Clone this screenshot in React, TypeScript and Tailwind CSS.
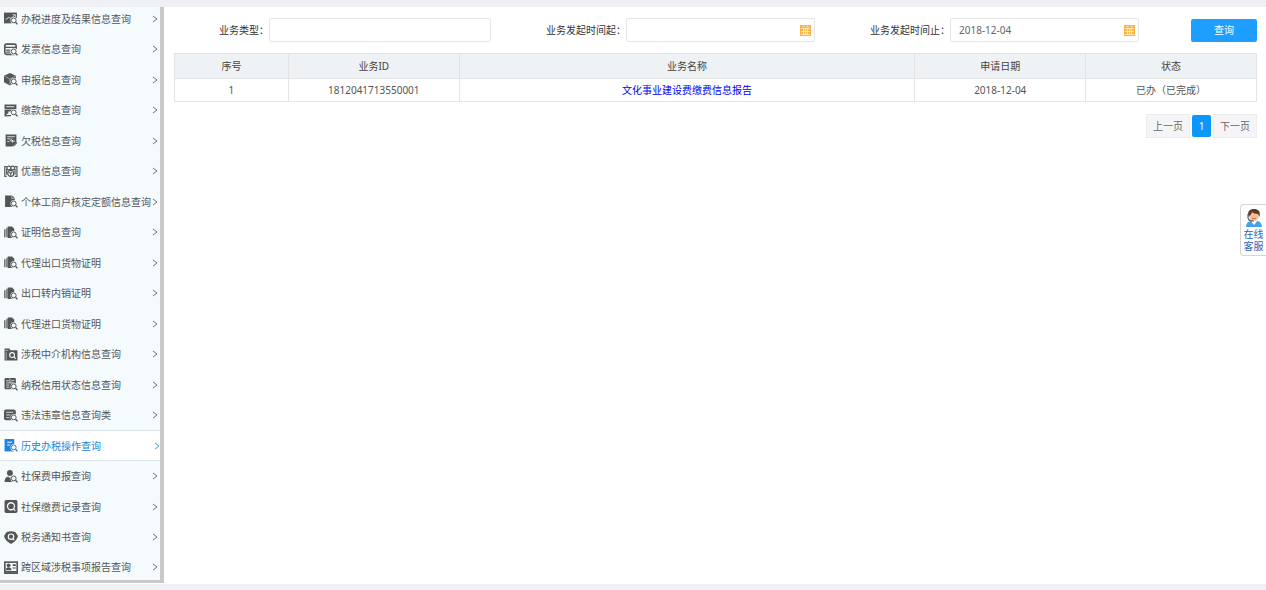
import { useState, type ReactNode } from "react";
import clsx from "clsx";

type MenuItem = {
  label: string;
  icon: ReactNode;
};

/* Small magnifier in the corner of most menu icons */
function Lens() {
  return (
    <g>
      <circle cx="18.5" cy="15.5" r="6.5" fill="#f5fafd" stroke="none" />
      <circle cx="18" cy="15.5" r="4.5" fill="#f5fafd" stroke="currentColor" strokeWidth="1.8" />
      <path d="M21.5 19l3.5 4" stroke="currentColor" strokeWidth="2.4" />
    </g>
  );
}

const stackedDocs = (
  <>
    <path d="M0 6h3v15H0zM4 3h3v18H4z" opacity="0.8" />
    <path d="M7 1h8l4 4v17H7z" />
    <Lens />
  </>
);

const menu: MenuItem[] = [
  {
    label: "办税进度及结果信息查询",
    icon: (
      <>
        <path d="M0 1h24v20H0z" />
        <path d="M3 14l6-4 4 2 7-6M16 5h5v4" stroke="#f5fafd" strokeWidth="1.4" fill="none" />
        <Lens />
      </>
    ),
  },
  {
    label: "发票信息查询",
    icon: (
      <>
        <rect x="1.5" y="2" width="21" height="19" rx="3" fill="none" stroke="currentColor" strokeWidth="3" />
        <path d="M1 8h22M4 13h8M4 17h8" stroke="currentColor" strokeWidth="2.4" />
        <Lens />
      </>
    ),
  },
  {
    label: "申报信息查询",
    icon: (
      <>
        <path d="M11 0l11 5v12l-11 6-11-6V5z" />
        <path d="M1 6l10 5 10-5M11 11v11" stroke="#f5fafd" strokeWidth="0.8" fill="none" />
        <Lens />
      </>
    ),
  },
  {
    label: "缴款信息查询",
    icon: (
      <>
        <path d="M1 1h22v9H1zM1 11h12v3H8v4H5v5H1z" />
        <path d="M4 5h15" stroke="#f5fafd" strokeWidth="1.6" />
        <path d="M5 21.5h8" stroke="currentColor" strokeWidth="2.4" />
        <Lens />
      </>
    ),
  },
  {
    label: "欠税信息查询",
    icon: (
      <>
        <path d="M3 1h20v15l-6 7H3z" />
        <path d="M6 5h14M6 9h6M15 8l-3 5h8M16 11v5M6 14h4" stroke="#f5fafd" strokeWidth="1.5" fill="none" />
        <path d="M15 23l9-8v8z" fill="#f5fafd" />
        <path d="M16 18l2.5 3.5 5.5-6" stroke="currentColor" strokeWidth="2" fill="none" />
      </>
    ),
  },
  {
    label: "优惠信息查询",
    icon: (
      <g fill="none" stroke="currentColor" strokeWidth="2.2">
        <path d="M5 3H1.5v18H5M20 3h4v18h-4M5 7v11M20.5 7v11" />
        <circle cx="9" cy="5.5" r="3.6" />
        <circle cx="16" cy="5.5" r="3.6" />
        <circle cx="12.5" cy="15.5" r="5.5" />
        <path d="M10 13l2.5 3 2.5-3M12.5 15v5" />
      </g>
    ),
  },
  {
    label: "个体工商户核定定额信息查询",
    icon: (
      <>
        <path d="M2 1h13l5 5v16H2z" />
        <path d="M14.5 1v5.5h5" stroke="#f5fafd" strokeWidth="1" fill="none" />
        <Lens />
      </>
    ),
  },
  { label: "证明信息查询", icon: stackedDocs },
  { label: "代理出口货物证明", icon: stackedDocs },
  { label: "出口转内销证明", icon: stackedDocs },
  { label: "代理进口货物证明", icon: stackedDocs },
  {
    label: "涉税中介机构信息查询",
    icon: (
      <>
        <path d="M1 1h9l2 3h13v19H1z" />
        <path d="M2 4.5h6M4 8v14" stroke="#f5fafd" strokeWidth="1" />
        <circle cx="15" cy="13" r="4.5" fill="none" stroke="#f5fafd" strokeWidth="2" />
        <path d="M18 16l4 4" stroke="#f5fafd" strokeWidth="2" />
      </>
    ),
  },
  {
    label: "纳税信用状态信息查询",
    icon: (
      <>
        <rect x="1" y="0" width="21" height="21" rx="2" />
        <path d="M4 5h5M13 5h6M4 9h15M4 13h6M4 17h6M11 1v8" stroke="#f5fafd" strokeWidth="1.4" />
        <Lens />
      </>
    ),
  },
  {
    label: "违法违章信息查询类",
    icon: (
      <>
        <rect x="0" y="1" width="22" height="20" rx="4" />
        <path d="M4 6h13M4 11h8M4 16h6" stroke="#f5fafd" strokeWidth="1.5" />
        <Lens />
      </>
    ),
  },
  {
    label: "历史办税操作查询",
    icon: (
      <>
        <path d="M1 0h18v23H1z" />
        <path d="M6 6h9M6 11h5" stroke="#ffffff" strokeWidth="2" />
        <Lens />
      </>
    ),
  },
  {
    label: "社保费申报查询",
    icon: (
      <>
        <circle cx="11" cy="5.5" r="5.5" />
        <path d="M1 22c0-6 3-10 7-10l3 3 3-3c4 0 7 3 7 10z" />
        <Lens />
      </>
    ),
  },
  {
    label: "社保缴费记录查询",
    icon: (
      <>
        <rect x="1" y="0" width="24" height="24" rx="3" />
        <circle cx="13" cy="11.5" r="6.5" fill="none" stroke="#f5fafd" strokeWidth="2.4" />
        <path d="M17 16l4 4" stroke="#f5fafd" strokeWidth="2.2" />
      </>
    ),
  },
  {
    label: "税务通知书查询",
    icon: (
      <>
        <path d="M5 2c5-2 11-2 16 0l5 7c-1 6-6 11-13 15C6 20 1 15 0 9z" />
        <circle cx="13" cy="10.5" r="5" fill="none" stroke="#f5fafd" strokeWidth="2.2" />
        <path d="M16 14l3 3" stroke="#f5fafd" strokeWidth="2" />
      </>
    ),
  },
  {
    label: "跨区域涉税事项报告查询",
    icon: (
      <>
        <rect x="1.5" y="2" width="23" height="18" fill="none" stroke="currentColor" strokeWidth="3" />
        <circle cx="8.5" cy="8" r="3.5" />
        <path d="M3 17c0-7 11-7 11 0zM16 6h6v3h-6zM16 12h6v2h-6zM0 21h26v3H0z" />
      </>
    ),
  },
];

const records = [
  {
    no: 1,
    id: "1812041713550001",
    name: "文化事业建设费缴费信息报告",
    date: "2018-12-04",
    status: "已办（已完成）",
  },
];

function Sidebar() {
  const [active, setActive] = useState("历史办税操作查询");

  return (
    <nav className="w-[164px] shrink-0 border-r-4 border-b-[3px] border-[#c9c9c9] bg-[#f5fafd]">
      <ul>
        {menu.map((item) => {
          const current = item.label === active;
          return (
            <li
              key={item.label}
              className="h-[30px] odd:h-[31px] first:h-[27px]! first:pb-1 last:h-7! last:pt-0.5"
            >
              <a
                href="#"
                onClick={() => setActive(item.label)}
                className={clsx(
                  "flex h-full items-center pl-1 whitespace-nowrap",
                  current
                    ? "border-y border-[#dde4e9] bg-white text-[#1b84e0]"
                    : "pr-0.5 text-[#555555]"
                )}
              >
                <svg viewBox="0 0 26 24" className="mr-[3px] h-[13px] w-3.5 shrink-0" fill="currentColor">
                  {item.icon}
                </svg>
                <span className="flex-1">{item.label}</span>
                <svg viewBox="0 0 6 8" className="h-2 w-1.5 shrink-0 opacity-80" fill="none" stroke="currentColor">
                  <path d="M1 1l4 3-4 3" />
                </svg>
              </a>
            </li>
          );
        })}
      </ul>
    </nav>
  );
}

function CalendarIcon() {
  return (
    <svg viewBox="0 0 11 11" className="h-[11px] w-[11px]">
      <path d="M0 0h11v11H0z" fill="#f9b548" />
      <path d="M1 3.5h9M1 6.5h9M1 9.5h9M3.5 3v7M5.5 3v7M7.5 3v7" stroke="#fff3dc" strokeWidth="0.7" />
      <path d="M2.5 1.5h2M6.5 1.5h2" stroke="#fff3dc" strokeWidth="0.8" />
    </svg>
  );
}

function DateField({ id, label, value }: { id: string; label: string; value?: string }) {
  return (
    <div className="flex items-center">
      <label htmlFor={id} className="w-[135px] shrink-0 text-right">
        {label}
      </label>
      <div className="flex h-6 min-w-0 flex-1 items-center rounded-xs border border-[#e6e6e6] bg-white pr-[3px]">
        <input
          id={id}
          type="text"
          defaultValue={value}
          className="h-full min-w-0 flex-1 pl-2 text-[#666666] outline-none"
        />
        <button type="button" aria-label="选择日期">
          <CalendarIcon />
        </button>
      </div>
    </div>
  );
}

function SearchForm() {
  return (
    <form
      onSubmit={(e) => e.preventDefault()}
      className="grid grid-cols-[317fr_324fr_324fr_118fr] items-center text-[#333333]"
    >
      <div className="flex items-center">
        <label htmlFor="type" className="w-[95px] shrink-0 text-right">
          业务类型：
        </label>
        <input
          id="type"
          type="text"
          className="h-6 min-w-0 flex-1 rounded-xs border border-[#e6e6e6] bg-white px-2 outline-none"
        />
      </div>
      <DateField id="start" label="业务发起时间起：" />
      <DateField id="end" label="业务发起时间止：" value="2018-12-04" />
      <button type="submit" className="h-[23px] w-[66px] justify-self-end rounded-xs bg-[#1e9fff] text-white">
        查询
      </button>
    </form>
  );
}

function ResultTable() {
  return (
    <table className="mt-[11px] w-full table-fixed border-collapse text-center [&_td]:border [&_td]:border-[#e2e4e6] [&_th]:border [&_th]:border-[#e2e4e6] [&_th]:font-normal">
      <colgroup>
        <col className="w-2/19" />
        <col className="w-3/19" />
        <col className="w-8/19" />
        <col className="w-3/19" />
        <col className="w-3/19" />
      </colgroup>
      <thead>
        <tr className="h-[25px] bg-[#eff2f5] text-[#444444]">
          <th>序号</th>
          <th>业务ID</th>
          <th>业务名称</th>
          <th>申请日期</th>
          <th>状态</th>
        </tr>
      </thead>
      <tbody>
        {records.map((r) => (
          <tr key={r.id} className="h-[23px] text-[#555555]">
            <td>{r.no}</td>
            <td>{r.id}</td>
            <td>
              <a href="#" className="text-[#0000ee]">
                {r.name}
              </a>
            </td>
            <td>{r.date}</td>
            <td>{r.status}</td>
          </tr>
        ))}
      </tbody>
    </table>
  );
}

function Pagination() {
  return (
    <div className="mt-3 flex items-center justify-end gap-0.5 text-[#666666]">
      <button className="h-6 w-11 border border-[#ececee] bg-[#f5f5f8]">上一页</button>
      <button aria-current="page" className="h-[22px] w-[19px] rounded-xs bg-[#0c97fb] text-white">
        1
      </button>
      <button className="h-6 w-11 border border-[#ececee] bg-[#f5f5f8]">下一页</button>
    </div>
  );
}

function OnlineService() {
  return (
    <a
      href="#"
      className="fixed top-[204px] right-0 flex w-[26px] flex-col items-center rounded-l border border-r-0 border-[#d2d6da] bg-white py-[3px] leading-3 text-[#1f66b5]"
    >
      <svg viewBox="0 0 18 20" className="h-5 w-[18px]">
        <path d="M1 19c0-4 3-6 5-6l3 3 3-3c2 0 5 2 5 6z" fill="#45a3e6" />
        <path d="M6.5 11h5v3L9 17l-2.5-3z" fill="#fff" />
        <circle cx="9" cy="8" r="4.8" fill="#f3bd95" />
        <path d="M3.5 9C2 3 5 1 9 1s7 2 5.5 8l-1.5-3c-3 0-5-1-6-2 0 2-2 3-3.5 5z" fill="#5b3a28" />
        <path d="M3 6v4M3 10c1 3 3 3 6 3" stroke="#56606a" strokeWidth="1.2" fill="none" />
        <path d="M7 10.5h4" stroke="#c95c4a" strokeWidth="0.8" />
      </svg>
      <span>在线</span>
      <span>客服</span>
    </a>
  );
}

export default function App() {
  return (
    <div className="min-h-screen bg-[#eff0f4] pt-[7px] pb-1.5 font-['Noto_Sans','Noto_Sans_CJK_SC',sans-serif] text-[10px] leading-4">
      <div className="flex bg-white pb-px">
        <Sidebar />
        <main className="min-w-0 flex-1 pt-[11px] pr-[9px] pl-2.5">
          <SearchForm />
          <ResultTable />
          <Pagination />
        </main>
      </div>
      <OnlineService />
    </div>
  );
}
